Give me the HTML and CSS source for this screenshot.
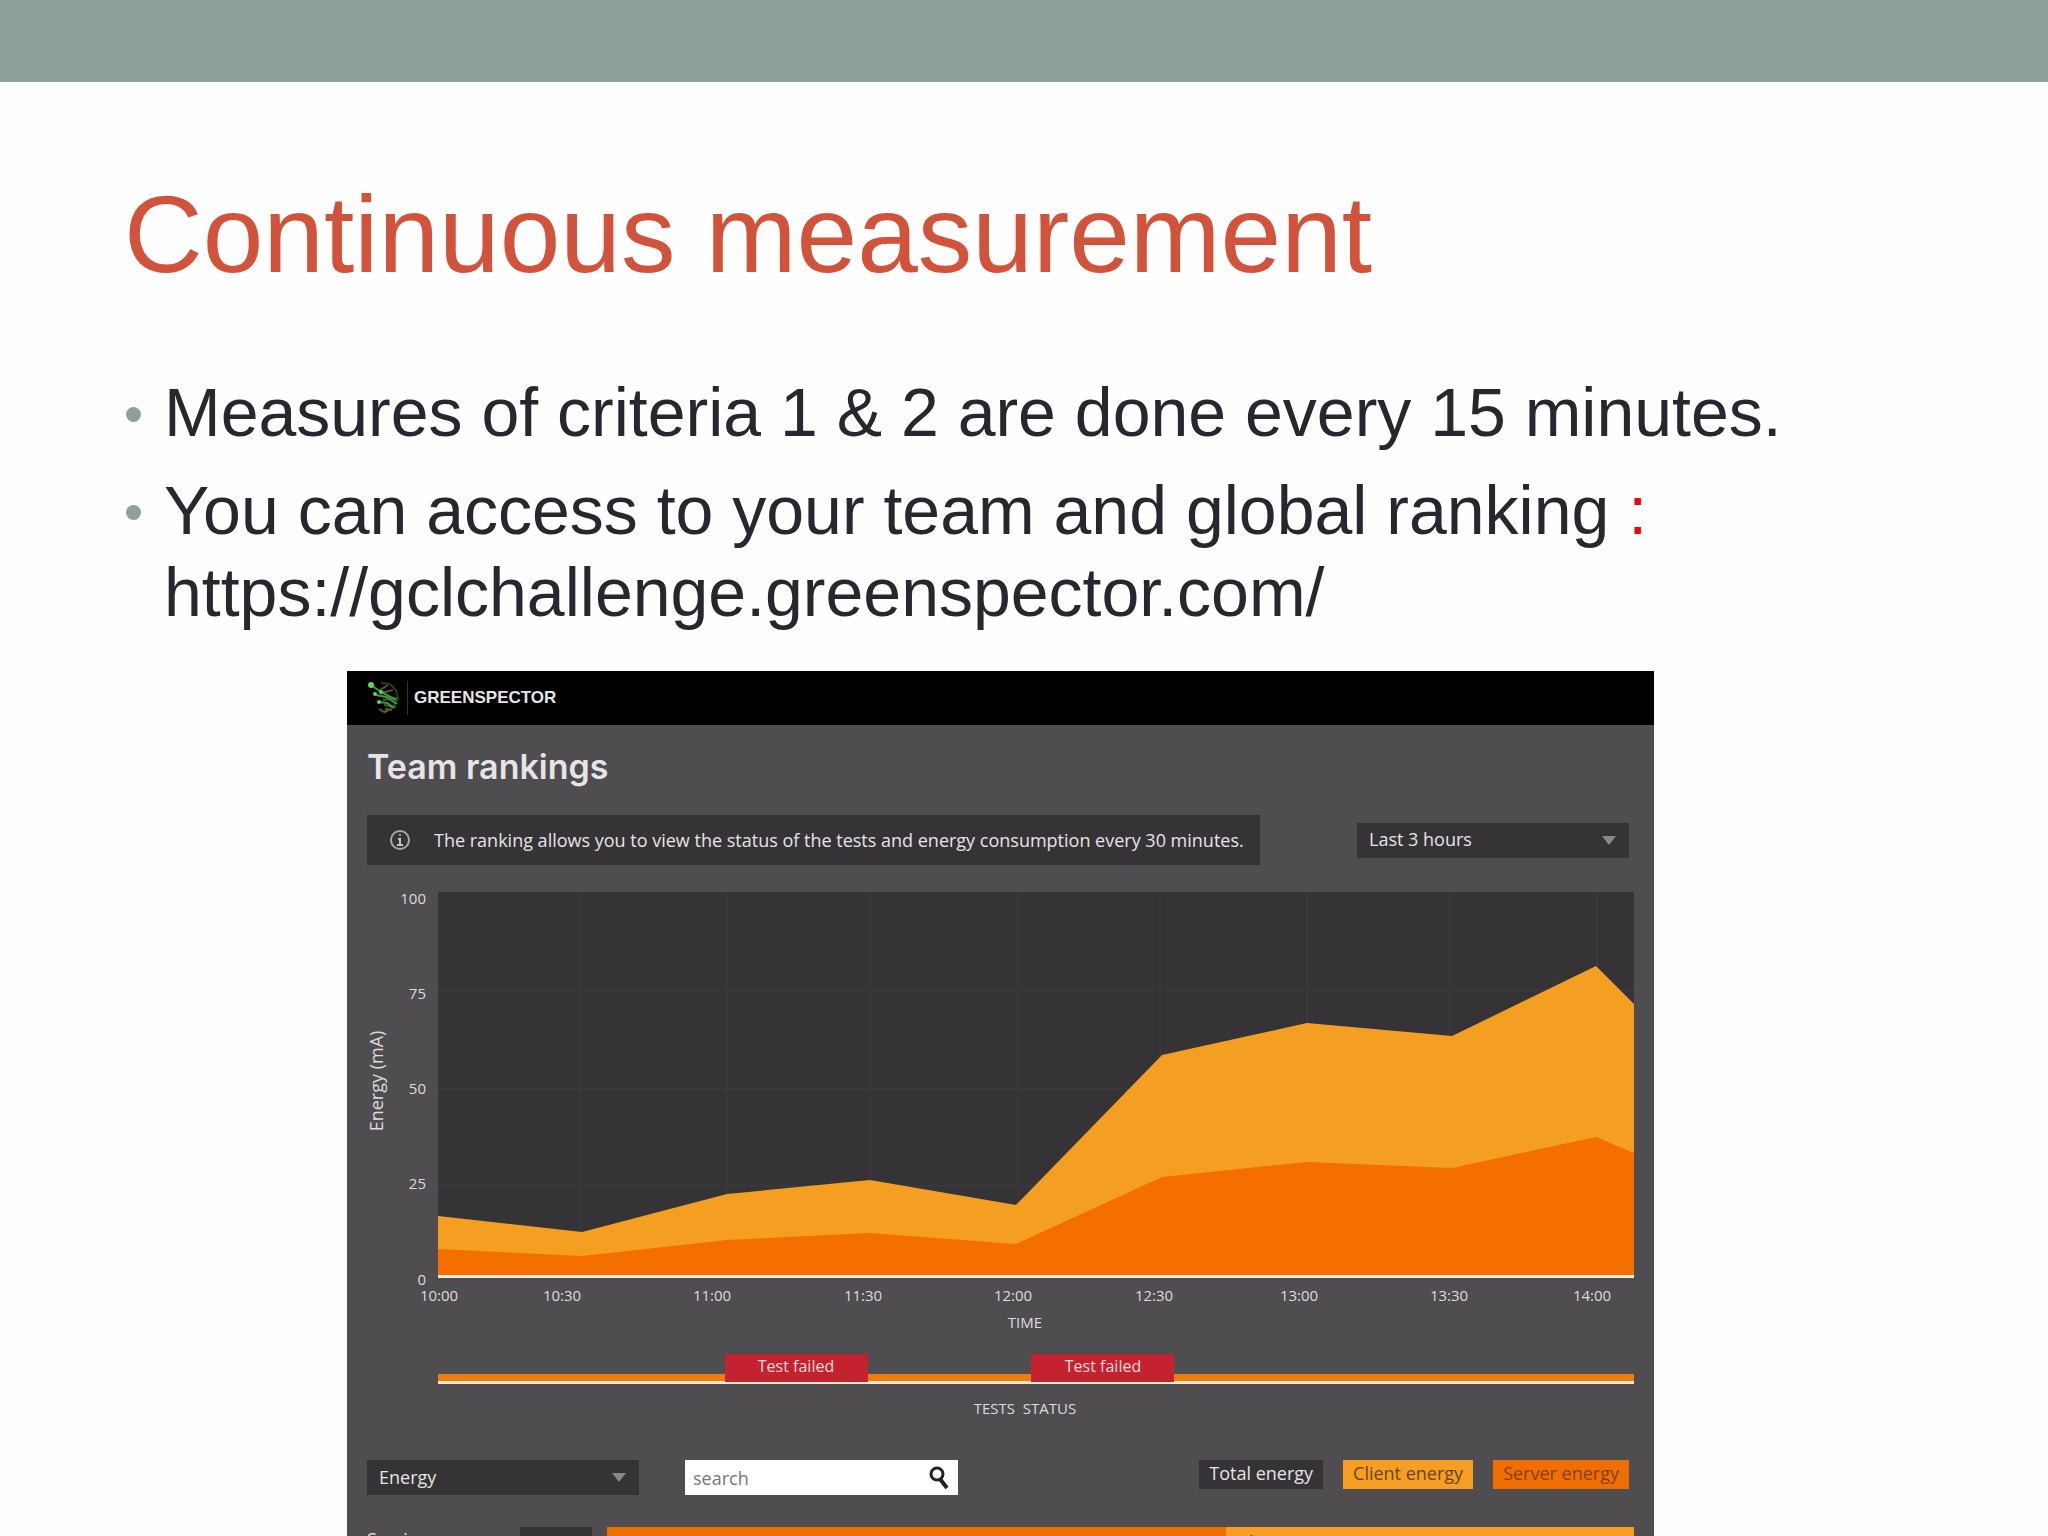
FILE: index.html
```html
<!DOCTYPE html>
<html lang="en">
<head>
<meta charset="utf-8">
<title>Continuous measurement</title>
<link rel="stylesheet" href="styles.css">
</head>
<body>
<div class="band"></div>
<main class="slide">
  <h1 class="title">Continuous measurement</h1>
  <ul class="points">
    <li>Measures of criteria 1 &amp; 2 are done every 15 minutes.</li>
    <li>You can access to your team and global ranking <span class="colon">:</span><br><a href="https://gclchallenge.greenspector.com/">https://gclchallenge.greenspector.com/</a></li>
  </ul>
  <section class="app">
    <header class="app-bar">
      <svg class="mark" viewBox="0 0 34 36" aria-hidden="true">
        <g fill="none" stroke-width="2">
          <path d="M14 3l9 1 6 6 2 9-5 8-9 6" stroke="#2e3b1d"/>
          <path d="M13 10l8-5M14 13l12-3M16 20l14-2M17 25l12 2M18 29l7 1" stroke="#4c5a2c"/>
          <path d="M4 5l10 7 15 8M9 15l10 2 11 7M12 22l8 1 7 5" stroke="#3f9a3c"/>
          <path d="M12 29l5 3 5-2" stroke="#555a50"/>
        </g>
        <g fill="#5fd35a"><circle cx="4" cy="5" r="3"/><circle cx="8" cy="14" r="2"/><circle cx="12" cy="22" r="2"/><circle cx="14" cy="12" r="2"/></g>
      </svg>
      <span class="brand">GREENSPECTOR</span>
    </header>
    <h2 class="app-title">Team rankings</h2>
    <div class="info-row">
      <p class="info">
        <svg class="info-icon" viewBox="0 0 20 20" aria-hidden="true"><circle cx="10" cy="10" r="9" fill="none" stroke="#a9a7a9" stroke-width="2"/><path d="M8 9h2v6M7 15h6" fill="none" stroke="#c4c2c4" stroke-width="2"/><circle cx="10" cy="5" r="1" fill="#c4c2c4"/></svg>
        The ranking allows you to view the status of the tests and energy consumption every 30 minutes.
      </p>
      <span class="picker"><select aria-label="Period"><option>Last 3 hours</option></select></span>
    </div>
    <svg class="chart" viewBox="0 0 1307 582" role="img" aria-label="Energy over time and tests status">
      <rect x="91" y="27" width="1196" height="384" fill="#353335"/>
      <path d="M233 27v384M380 27v384M523 27v384M671 27v384M813 27v384M960 27v384M1103 27v384M1250 27v384M91 125h1196M91 224h1196M91 321h1196" stroke="#3a383a" stroke-width="2" fill="none"/>
      <polygon fill="#f49f22" points="91,351 235,367 380,329 523,315 669,340 815,190 960,158 1105,171 1249,101 1287,139 1287,411 91,411"/>
      <polygon fill="#f56e00" points="91,384 235,391 380,375 523,368 669,379 815,312 960,297 1105,303 1249,272 1287,288 1287,411 91,411"/>
      <rect x="91" y="410" width="1196" height="3" fill="#fdeedd"/>
      <g class="tick tick-y"><text x="79" y="39">100</text><text x="79" y="134">75</text><text x="79" y="229">50</text><text x="79" y="324">25</text><text x="79" y="420">0</text></g>
      <g class="tick tick-x"><text x="92" y="436">10:00</text><text x="215" y="436">10:30</text><text x="365" y="436">11:00</text><text x="516" y="436">11:30</text><text x="666" y="436">12:00</text><text x="807" y="436">12:30</text><text x="952" y="436">13:00</text><text x="1102" y="436">13:30</text><text x="1245" y="436">14:00</text><text x="678" y="463">TIME</text><text x="678" y="549">TESTS&#160; STATUS</text></g>
      <text class="axis" transform="translate(36 216) rotate(-90)">Energy (mA)</text>
      <rect x="91" y="509" width="1196" height="7" fill="#ee7d0c"/>
      <rect x="91" y="516" width="1196" height="3" fill="#fde6d0"/>
      <g fill="#c5222f"><rect x="378" y="489" width="143" height="28"/><rect x="684" y="489" width="143" height="28"/></g>
      <g class="failed"><text x="449" y="507">Test failed</text><text x="756" y="507">Test failed</text></g>
    </svg>
    <div class="tools">
      <span class="picker"><select aria-label="Sort by"><option>Energy</option></select></span>
      <label class="search">
        <input type="text" placeholder="search" aria-label="Search">
        <svg viewBox="0 0 22 24" aria-hidden="true"><circle cx="9" cy="8" r="6" fill="none" stroke="#222" stroke-width="3"/><path d="M12 13l7 9" stroke="#222" stroke-width="4"/></svg>
      </label>
      <div class="legend">
        <span class="tag total">Total energy</span>
        <span class="tag client">Client energy</span>
        <span class="tag server">Server energy</span>
      </div>
    </div>
    <div class="result">
      <span class="team">Services</span>
      <span class="score">277 mA</span>
      <span class="bar server">Server</span>
      <span class="bar client">Client</span>
    </div>
  </section>
</main>
</body>
</html>
```
FILE: styles.css
```css
* { box-sizing: border-box; }
body {
  margin: 0;
  height: 100vh;
  overflow: hidden;
  background: #fefefe;
  color: #28262e;
  font-family: "Liberation Sans", Arial, sans-serif;
}
.band { height: 82px; background: #8fa098; }
.slide { padding: 88px 124px 0; }
.title {
  margin: 0;
  color: #d1533b;
  font-size: 109px;
  font-weight: 400;
  line-height: 128px;
}
.points {
  margin: 73px 0 0;
  padding: 0;
  list-style: none;
  font-size: 68px;
  line-height: 82px;
}
.points li { position: relative; padding-left: 40px; margin-bottom: 16px; }
.points li::before {
  content: "";
  position: absolute;
  left: 2px;
  top: 36px;
  width: 15px;
  height: 15px;
  border-radius: 50%;
  background: #8fa098;
}
.points a { color: inherit; text-decoration: none; }
.colon { color: #f00; }

.app {
  margin: 38px 270px 0 223px;
  background: #4f4d4f;
  color: #e6e4e6;
  font-family: "Open Sans", sans-serif;
  font-size: 18px;
}
.app-bar {
  display: flex;
  align-items: center;
  gap: 6px;
  height: 54px;
  padding-left: 20px;
  background: #000;
}
.mark { width: 34px; height: 36px; }
.brand {
  padding-left: 6px;
  border-left: 1px solid #333;
  font-family: "Liberation Sans", sans-serif;
  font-size: 17px;
  font-weight: 700;
  line-height: 34px;
}
.app-title {
  margin: 0;
  padding: 22px 20px 0;
  font-family: Inter, sans-serif;
  font-size: 34px;
  font-weight: 600;
  line-height: 40px;
}
.info-row {
  display: flex;
  justify-content: space-between;
  align-items: center;
  margin: 28px 25px 0 20px;
}
.info {
  display: flex;
  align-items: center;
  gap: 24px;
  height: 50px;
  margin: 0;
  padding: 0 16px 0 23px;
  background: #353335;
  white-space: nowrap;
}
.info-icon { width: 20px; height: 20px; }
.picker { position: relative; width: 272px; height: 35px; }
.picker select {
  appearance: none;
  width: 100%;
  height: 100%;
  padding: 0 12px 2px;
  border: 0;
  background: #353335;
  color: #e6e4e6;
  font: inherit;
}
.picker::after {
  content: "";
  position: absolute;
  right: 13px;
  top: 13px;
  border: 7px solid transparent;
  border-top: 9px solid #8a888a;
  border-bottom: 0;
}
.chart { display: block; width: 100%; fill: #dddbdd; }
.tick { font-size: 15px; }
.tick-y { text-anchor: end; }
.tick-x, .axis, .failed { text-anchor: middle; }
.axis { font-size: 18px; }
.failed { font-size: 16px; fill: #fbdcdc; }
.tools {
  display: flex;
  gap: 46px;
  margin: 13px 25px 0 20px;
}
.search {
  display: flex;
  align-items: center;
  width: 273px;
  height: 35px;
  padding: 0 8px;
  background: #fff;
}
.search input {
  flex: 1;
  min-width: 0;
  padding: 0;
  border: 0;
  outline: 0;
  font: inherit;
}
.search input::placeholder { color: #777; opacity: 1; }
.search svg { width: 22px; height: 24px; }
.legend { display: flex; gap: 20px; margin-left: auto; }
.tag { height: 29px; padding: 0 10px; line-height: 27px; }
.total { background: #353335; }
.client { background: #f49f22; color: #6b4310; }
.server { background: #ee6f00; color: #8a3c00; }
.result {
  display: grid;
  grid-template-columns: 153px 72px 635fr 409fr;
  height: 36px;
  margin: 32px 20px 0 20px;
  line-height: 30px;
}
.team { line-height: 24px; }
.score { padding-left: 4px; background: #353335; white-space: nowrap; }
.bar { padding-left: 12px; }
.bar.server { margin-left: 15px; }
```
